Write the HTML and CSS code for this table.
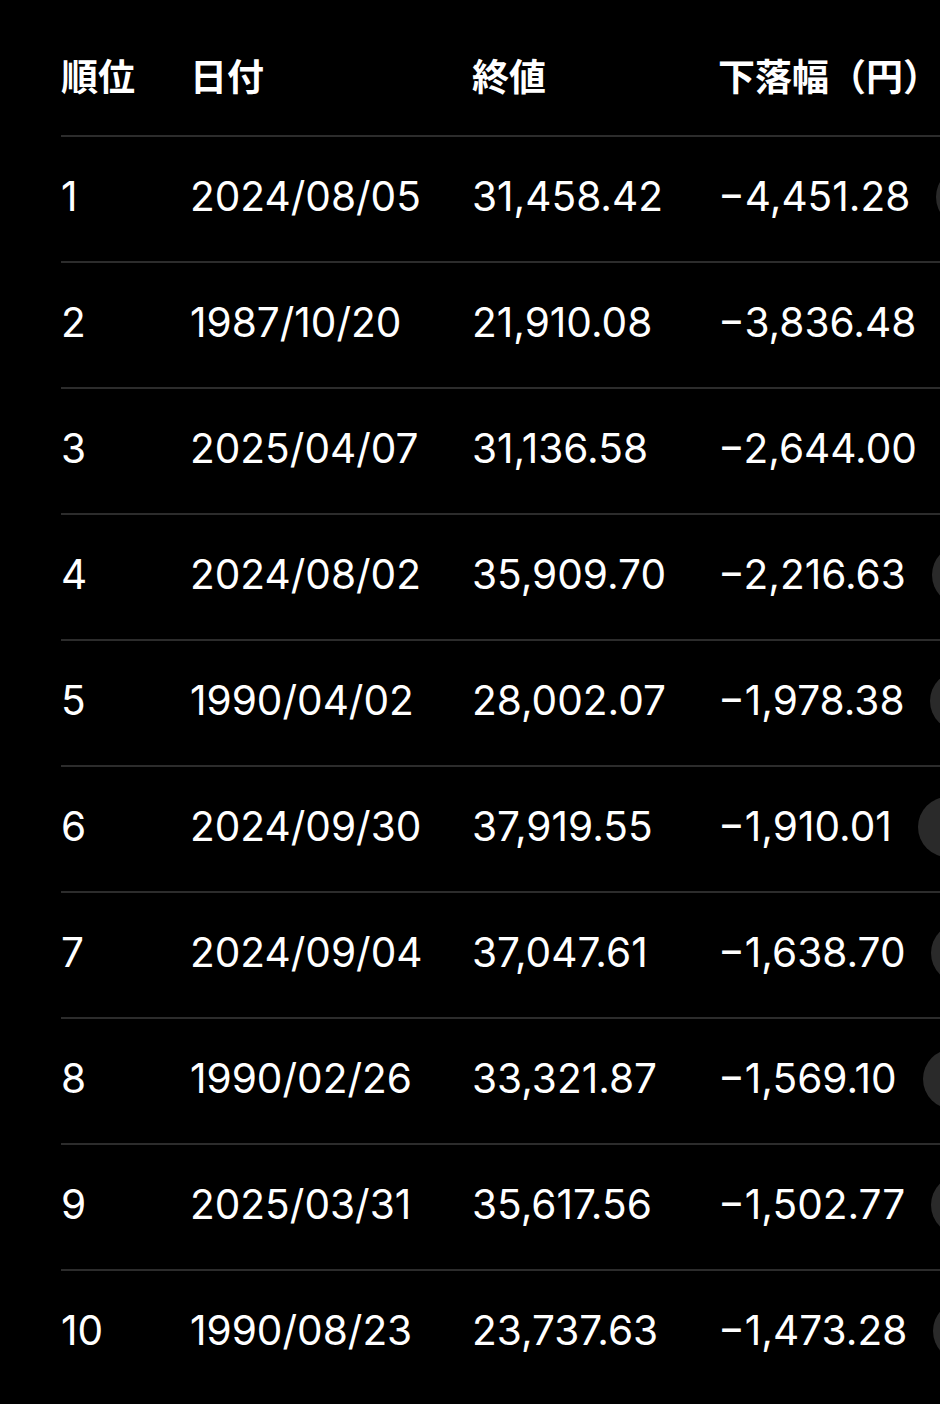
FILE: index.html
```html
<!DOCTYPE html>
<html lang="ja">
<head>
<meta charset="utf-8">
<title>下落幅ランキング</title>
<link rel="stylesheet" href="styles.css">
</head>
<body>
<div class="table">
  <div class="row head">
    <div class="cell">順位</div>
    <div class="cell">日付</div>
    <div class="cell">終値</div>
    <div class="cell">下落幅（円）</div>
  </div>
  <div class="row"><div class="cell">1</div><div class="cell">2024/08/05</div><div class="cell">31,458.42</div><div class="cell last">−4,451.28<span class="pill"></span></div></div>
  <div class="row"><div class="cell">2</div><div class="cell">1987/10/20</div><div class="cell">21,910.08</div><div class="cell last">−3,836.48<span class="pill"></span></div></div>
  <div class="row"><div class="cell">3</div><div class="cell">2025/04/07</div><div class="cell">31,136.58</div><div class="cell last">−2,644.00<span class="pill"></span></div></div>
  <div class="row"><div class="cell">4</div><div class="cell">2024/08/02</div><div class="cell">35,909.70</div><div class="cell last">−2,216.63<span class="pill"></span></div></div>
  <div class="row"><div class="cell">5</div><div class="cell">1990/04/02</div><div class="cell">28,002.07</div><div class="cell last">−1,978.38<span class="pill"></span></div></div>
  <div class="row"><div class="cell">6</div><div class="cell">2024/09/30</div><div class="cell">37,919.55</div><div class="cell last">−1,910.01<span class="pill"></span></div></div>
  <div class="row"><div class="cell">7</div><div class="cell">2024/09/04</div><div class="cell">37,047.61</div><div class="cell last">−1,638.70<span class="pill"></span></div></div>
  <div class="row"><div class="cell">8</div><div class="cell">1990/02/26</div><div class="cell">33,321.87</div><div class="cell last">−1,569.10<span class="pill"></span></div></div>
  <div class="row"><div class="cell">9</div><div class="cell">2025/03/31</div><div class="cell">35,617.56</div><div class="cell last">−1,502.77<span class="pill"></span></div></div>
  <div class="row"><div class="cell">10</div><div class="cell">1990/08/23</div><div class="cell">23,737.63</div><div class="cell last">−1,473.28<span class="pill"></span></div></div>
</div>
</body>
</html>
```

FILE: styles.css
```css
html, body {
  margin: 0;
  padding: 0;
  background: #000;
  overflow: hidden;
}
body {
  color: #fff;
  font-family: Inter, "Noto Sans CJK JP", sans-serif;
}
.table {
  margin-left: 61px;
  width: 1200px;
}
.row {
  display: grid;
  grid-template-columns: 129px 282px 246px auto;
  align-items: center;
  height: 119px;
  padding-bottom: 5px;
  border-bottom: 2px solid #2c2c2c;
  font-size: 40.6px;
  font-weight: 400;
}
.row:last-child {
  border-bottom: none;
}
.row.head {
  height: 121px;
  padding-top: 14px;
  padding-bottom: 0;
  font-size: 37px;
  font-weight: 700;
}
.cell {
  white-space: nowrap;
}
.last {
  display: flex;
  align-items: center;
  gap: 26px;
}
.pill {
  display: block;
  flex: none;
  width: 150px;
  height: 60px;
  border-radius: 30px;
  background: #2a2a2a;
}
```
